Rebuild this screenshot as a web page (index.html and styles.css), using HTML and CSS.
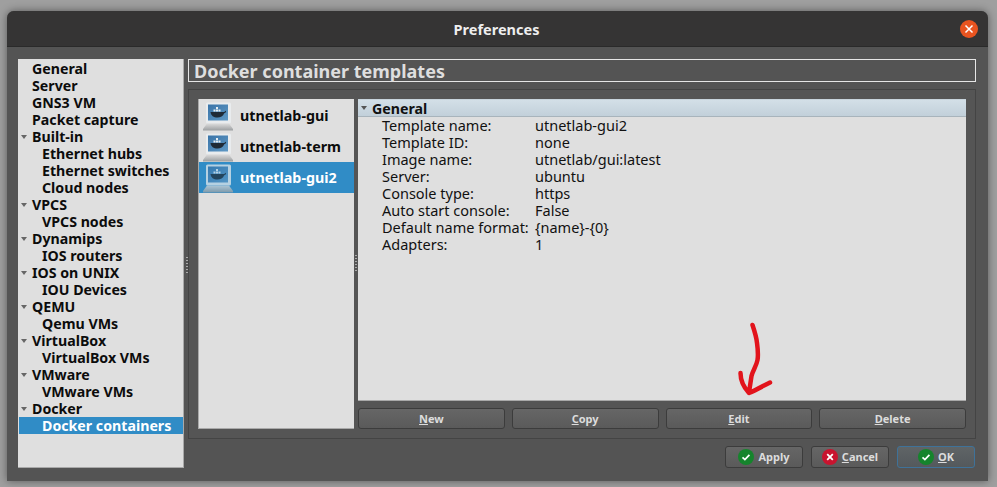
FILE: index.html
```html
<!DOCTYPE html>
<html lang="en">
<head>
<meta charset="utf-8">
<title>Preferences</title>
<link rel="stylesheet" href="styles.css">
</head>
<body>
<svg width="0" height="0" class="defs">
  <defs>
    <linearGradient id="screen" x1="0" y1="0" x2="1" y2="1">
      <stop offset="0" stop-color="#3a74a8"/>
      <stop offset="1" stop-color="#5f98c4"/>
    </linearGradient>
    <linearGradient id="base" x1="0" y1="0" x2="0" y2="1">
      <stop offset="0" stop-color="#dcdcdc"/>
      <stop offset="1" stop-color="#9c9fa1"/>
    </linearGradient>
    <symbol id="pc" viewBox="0 0 30 30">
      <rect x="3" y="1.500" width="25" height="21" rx="1.500" fill="#e9ecee"/>
      <rect x="5" y="3.500" width="20" height="16" fill="url(#screen)"/>
      <path d="M7.500 11h13c1 0 1.700-1 2.500-1.300.3 1.200-.8 2.400-1.800 2.600-1.200 2.900-3.600 4.200-6.700 4.200-4 0-6.500-1.800-7-5.500z" fill="#1f2a36"/>
      <path d="M10.500 8.500h2v2h-2zM13 8.500h2v2h-2zM15.500 8.500h2v2h-2zM13 6h2v2h-2z" fill="#e8eef2"/>
      <path d="M4 22.500h22l4 5.500v1.500H0V28z" fill="url(#base)"/>
    </symbol>
    <symbol id="ok" viewBox="0 0 16 16">
      <circle cx="8" cy="8" r="8" fill="#15842c"/>
      <path d="M4.500 8.300l2.400 2.300 4.500-4.800" fill="none" stroke="#fff" stroke-width="1.700"/>
    </symbol>
    <symbol id="no" viewBox="0 0 16 16">
      <circle cx="8" cy="8" r="8" fill="#c8142f"/>
      <path d="M5.200 5.200l5.600 5.600M10.800 5.200l-5.600 5.600" fill="none" stroke="#fff" stroke-width="1.800"/>
    </symbol>
  </defs>
</svg>
<div class="window">
  <header class="titlebar">
    <span class="title">Preferences</span>
    <span class="close"><svg width="10" height="10" viewBox="0 0 10 10"><path d="M1.500 1.500l7 7M8.500 1.500l-7 7" stroke="#fff" stroke-width="1.500" fill="none"/></svg></span>
  </header>
  <div class="body">
    <nav class="nav">
      <div class="row top">General</div>
      <div class="row top">Server</div>
      <div class="row top">GNS3 VM</div>
      <div class="row top">Packet capture</div>
      <div class="row top open">Built-in</div>
      <div class="row sub">Ethernet hubs</div>
      <div class="row sub">Ethernet switches</div>
      <div class="row sub">Cloud nodes</div>
      <div class="row top open">VPCS</div>
      <div class="row sub">VPCS nodes</div>
      <div class="row top open">Dynamips</div>
      <div class="row sub">IOS routers</div>
      <div class="row top open">IOS on UNIX</div>
      <div class="row sub">IOU Devices</div>
      <div class="row top open">QEMU</div>
      <div class="row sub">Qemu VMs</div>
      <div class="row top open">VirtualBox</div>
      <div class="row sub">VirtualBox VMs</div>
      <div class="row top open">VMware</div>
      <div class="row sub">VMware VMs</div>
      <div class="row top open">Docker</div>
      <div class="row sub selected">Docker containers</div>
    </nav>
    <div class="grip grip-outer"></div>
    <main class="main">
      <h1 class="heading">Docker container templates</h1>
      <section class="frame">
        <ul class="templates">
          <li class="template"><svg class="pc"><use href="#pc"/></svg>utnetlab-gui</li>
          <li class="template"><svg class="pc"><use href="#pc"/></svg>utnetlab-term</li>
          <li class="template selected"><svg class="pc"><use href="#pc"/></svg>utnetlab-gui2</li>
        </ul>
        <div class="grip"></div>
        <div class="detail">
          <div class="tree">
            <div class="tree-head">General</div>
            <dl class="props">
              <dt>Template name:</dt><dd>utnetlab-gui2</dd>
              <dt>Template ID:</dt><dd>none</dd>
              <dt>Image name:</dt><dd>utnetlab/gui:latest</dd>
              <dt>Server:</dt><dd>ubuntu</dd>
              <dt>Console type:</dt><dd>https</dd>
              <dt>Auto start console:</dt><dd>False</dd>
              <dt>Default name format:</dt><dd>{name}-{0}</dd>
              <dt>Adapters:</dt><dd>1</dd>
            </dl>
          </div>
          <div class="actions">
            <button class="btn"><span><u>N</u>ew</span></button>
            <button class="btn"><span><u>C</u>opy</span></button>
            <button class="btn"><span><u>E</u>dit</span></button>
            <button class="btn"><span><u>D</u>elete</span></button>
          </div>
        </div>
      </section>
      <footer class="footer">
        <button class="btn dlg"><svg class="ico"><use href="#ok"/></svg><span>Apply</span></button>
        <button class="btn dlg"><svg class="ico"><use href="#no"/></svg><span><u>C</u>ancel</span></button>
        <button class="btn dlg default"><svg class="ico"><use href="#ok"/></svg><span><u>O</u>K</span></button>
      </footer>
    </main>
  </div>
</div>
<svg class="arrow" width="50" height="80" viewBox="730 320 50 80">
  <path d="M752.500 325c2 6 4 12 4.500 18 .8 6 1.500 11 .5 17-1 6-5 11-6 16l-2.500 16.500M740.500 373c0 7 3 14 8.500 20 7-3 14-7 21-10.500" fill="none" stroke="#e2141c" stroke-width="4.500" stroke-linecap="round" stroke-linejoin="round"/>
</svg>
</body>
</html>
```
FILE: styles.css
```css
* { box-sizing: border-box; }
html, body { margin: 0; height: 100%; }
body {
  position: relative;
  width: 997px;
  height: 487px;
  overflow: hidden;
  background: #9f9f9f;
  font-family: "Noto Sans", "Open Sans", sans-serif;
  font-size: 14px;
  padding: 11px 9px 6px 7px;
}
.defs { position: absolute; }
.window {
  width: 981px;
  height: 470px;
  background: #545454;
  border-radius: 7px 7px 0 0;
  box-shadow: 0 0 8px rgba(0,0,0,.45);
  display: flex;
  flex-direction: column;
}
.titlebar {
  height: 36px;
  flex: none;
  background: #353434;
  border-bottom: 1px solid #2a2a2a;
  border-radius: 7px 7px 0 0;
  display: flex;
  align-items: center;
  justify-content: center;
  position: relative;
}
.title { color: #eee; font-weight: 700; font-size: 14.500px; padding-top: 1px; padding-right: 2px; }
.close {
  position: absolute;
  right: 10px;
  top: 9px;
  width: 18px;
  height: 18px;
  border-radius: 50%;
  background: #e95420;
  display: flex;
  align-items: center;
  justify-content: center;
}
.body { flex: 1; display: flex; padding: 12px 12px 12px 11px; min-height: 0; }
.nav {
  width: 166px;
  height: 409px;
  flex: none;
  background: #dfdfdf;
  border-bottom: 1px solid #a9a9a9;
  border-right: 1px solid #a9a9a9;
  padding-top: 1px;
  color: #0c0c0c;
  font-weight: 700;
  font-size: 14.200px;
}
.row { height: 17px; line-height: 17px; white-space: nowrap; position: relative; }
.top { padding-left: 14px; }
.sub { padding-left: 24px; }
.open::before {
  content: "";
  position: absolute;
  left: 3px;
  top: 7px;
  border: 3.500px solid transparent;
  border-top: 4px solid #666;
  border-bottom: 0;
}
.row.selected { background: #308cc6; color: #fff; margin-left: 1px; padding-left: 23px; }
.grip { width: 4px; flex: none; align-self: center; height: 18px; background: repeating-linear-gradient(#aaa 0 1px, transparent 1px 3px); padding: 0 1px; background-clip: content-box; }
.grip-outer { position: absolute; left: 186px; top: 257px; width: 2px; padding: 0; }
.main { flex: 1; margin-left: 4px; min-width: 0; display: flex; flex-direction: column; }
.heading {
  margin: 0;
  height: 23px;
  line-height: 22px;
  border: 1px solid #e6e6e6;
  color: #dedede;
  font-size: 18px;
  font-weight: 700;
  padding-left: 5px;
}
.frame {
  margin-top: 7px;
  height: 350px;
  flex: none;
  border: 1px solid #444;
  padding: 9px;
  display: flex;
  background: #555;
}
.templates {
  list-style: none;
  margin: 0;
  padding: 1px 0 0;
  width: 156px;
  flex: none;
  background: #dfdfdf;
  border-bottom: 1px solid #a9a9a9;
  color: #0c0c0c;
  font-weight: 700;
  border-left: 1px solid #a9a9a9;
}
.template { height: 31px; display: flex; align-items: center; gap: 7px; font-size: 14.300px; padding-left: 4px; }
.template.selected { background: #308cc6; color: #fff; }
.template.selected .pc { opacity: .72; }
.pc { width: 30px; height: 30px; flex: none; }
.detail { flex: 1; min-width: 0; display: flex; flex-direction: column; }
.tree { height: 302px; flex: none; background: #dfdfdf; border-bottom: 1px solid #a9a9a9; color: #111; font-size: 14.500px; }
.tree-head {
  height: 18px;
  line-height: 17px;
  background: linear-gradient(#d3dfe7, #c2d0da);
  border-top: 1px solid #c8d4dc;
  border-bottom: 1px solid #a8b4bc;
  font-weight: 700;
  font-size: 14.200px;
  padding-left: 14px;
  position: relative;
}
.tree-head::before {
  content: "";
  position: absolute;
  left: 3px;
  top: 6px;
  border: 3.500px solid transparent;
  border-top: 4px solid #555;
  border-bottom: 0;
}
.props {
  margin: 0;
  display: grid;
  grid-template-columns: 153px 1fr;
  grid-auto-rows: 17px;
  line-height: 17px;
  padding-left: 24px;
}
.props dt, .props dd { margin: 0; white-space: nowrap; }
.actions { margin-top: 7px; display: flex; gap: 7px; }
.btn {
  flex: 1;
  height: 21px;
  padding: 0 0 1px;
  border: 1px solid #3c3c3c;
  border-radius: 3px;
  background: linear-gradient(#666, #5a5a5a);
  color: #dcdcdc;
  font: 700 11px "Noto Sans", sans-serif;
  display: flex;
  align-items: center;
  justify-content: center;
  gap: 4px;
}
.footer { margin-top: 7px; display: flex; justify-content: flex-end; gap: 8px; padding-right: 1px; }
.dlg { flex: none; width: 78px; height: 22px; }
.default { border-color: #3f7299; background: linear-gradient(#5f6466, #54595c); }
.ico { width: 16px; height: 16px; flex: none; }
.arrow { position: absolute; left: 730px; top: 320px; }
```
